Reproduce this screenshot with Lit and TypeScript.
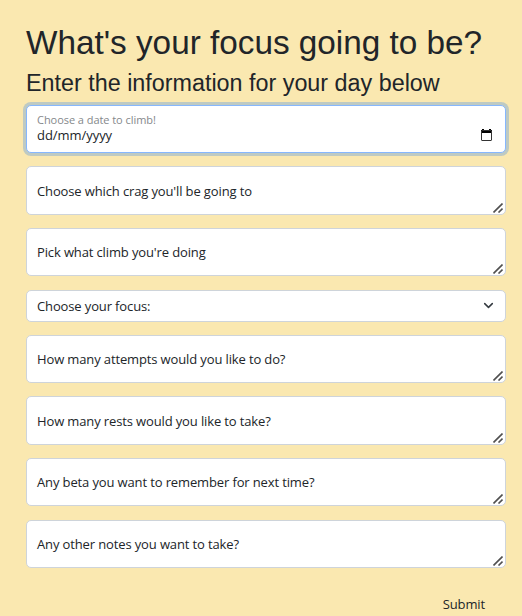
import { LitElement, html, css, svg } from "lit";
import { customElement } from "lit/decorators.js";
import { classMap } from "lit/directives/class-map.js";

interface Field {
  label: string;
  kind: "area" | "select";
  tall?: boolean;
  gap: "s" | "l";
}

const FIELDS: Field[] = [
  { label: "Choose which crag you'll be going to", kind: "area", tall: true, gap: "s" },
  { label: "Pick what climb you're doing", kind: "area", gap: "s" },
  { label: "Choose your focus:", kind: "select", gap: "l" },
  { label: "How many attempts would you like to do?", kind: "area", gap: "s" },
  { label: "How many rests would you like to take?", kind: "area", tall: true, gap: "s" },
  { label: "Any beta you want to remember for next time?", kind: "area", gap: "s" },
  { label: "Any other notes you want to take?", kind: "area", gap: "l" },
];

const grip = svg`<path d="M0.5 9.5 9.5 0.5M5.5 9.5 9.5 5.5" fill="none" stroke="#505050" stroke-width="1.6"/>`;

@customElement("app-root")
export class AppRoot extends LitElement {
  static styles = css`
    :host {
      display: block;
      box-sizing: border-box;
      height: 616px;
      overflow: hidden;
      padding: 23px 16px 0 26px;
      background: #fae8b0;
      color: #212529;
      font: 13px/20px "Open Sans", "Noto Sans", sans-serif;
      letter-spacing: -0.13px;
    }
    h1, h2 {
      margin: 0;
      font-family: "Liberation Sans", Arial, sans-serif;
      font-weight: 400;
      letter-spacing: 0;
      white-space: nowrap;
    }
    h1 { font-size: 33.3px; line-height: 40px; height: 46px; }
    h2 { font-size: 23.33px; line-height: 28px; height: 36px; }
    .field {
      box-sizing: border-box;
      position: relative;
      display: flex;
      height: 48px;
      padding: 13px 10px 0;
      border: 1px solid #ced4da;
      border-radius: 5px;
      background: #fff;
      white-space: nowrap;
    }
    .tall { height: 49px; padding-top: 14px; }
    .s { margin-top: 13px; }
    .l { margin-top: 14px; }
    .select { height: 32px; padding-top: 5px; justify-content: space-between; }
    .date {
      border-color: #86b7fe;
      box-shadow: 0 0 0 3px rgba(13, 110, 253, 0.25);
      padding-top: 6px;
      justify-content: space-between;
    }
    .stack { display: flex; flex-direction: column; }
    .hint { font-size: 11px; line-height: 16px; letter-spacing: -0.05px; color: #85888b; }
    .value { line-height: 16px; margin-top: -1px; letter-spacing: -0.05px; }
    .calendar { margin: 17px 3px 0 0; width: 11px; height: 12px; }
    .chevron { margin: 4px 1px 0 0; width: 11px; height: 11px; }
    .grip { position: absolute; right: 2px; bottom: 1px; width: 10px; height: 10px; }
    .submit {
      display: block;
      margin: 26px 21px 0 auto;
      padding: 0;
      border: 0;
      background: none;
      color: inherit;
      font: inherit;
      letter-spacing: -0.13px;
    }
  `;

  render() {
    return html`
      <h1>What's your focus going to be?</h1>
      <h2>Enter the information for your day below</h2>
      <div class="field date">
        <div class="stack">
          <span class="hint">Choose a date to climb!</span>
          <span class="value">dd/mm/yyyy</span>
        </div>
        <svg class="calendar" viewBox="0 0 11 12">
          <path d="M0 1h11v3H0zM1 0h2v1H1zM8 0h2v1H8z" fill="#000" />
          <rect x=".5" y="1.5" width="10" height="10" rx=".5" fill="none" stroke="#333" />
        </svg>
      </div>
      ${FIELDS.map(
        (f) => html`
          <div class=${classMap({ field: true, [f.kind]: true, tall: !!f.tall, [f.gap]: true })}>
            <span>${f.label}</span>
            ${f.kind === "select"
              ? html`<svg class="chevron" viewBox="0 0 11 11">
                  <path d="M1.7 3.6 5.5 7.4 9.3 3.6" fill="none" stroke="#343a40" stroke-width="1.5" stroke-linecap="round" stroke-linejoin="round" />
                </svg>`
              : html`<svg class="grip" viewBox="0 0 10 10">${grip}</svg>`}
          </div>
        `
      )}
      <button class="submit">Submit</button>
    `;
  }
}
